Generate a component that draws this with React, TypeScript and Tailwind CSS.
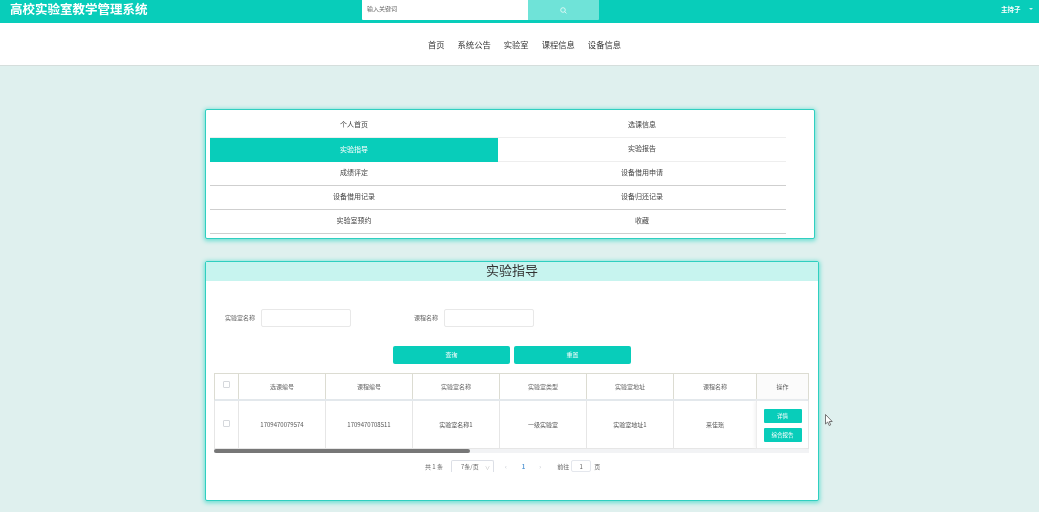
import React from "react";

const font = { fontFamily: '"Noto Sans CJK SC", "Liberation Sans", sans-serif' };

const menu = [
  ["个人首页", "选课信息"],
  ["实验指导", "实验报告"],
  ["成绩评定", "设备借用申请"],
  ["设备借用记录", "设备归还记录"],
  ["实验室预约", "收藏"],
];
const cols = ["选课编号", "课程编号", "实验室名称", "实验室类型", "实验室地址", "课程名称"];
const vals = ["1709470079574", "1709470708511", "实验室名称1", "一级实验室", "实验室地址1", "来佳瑶"];

function Box() {
  return <span className="block w-[7px] h-[7px] border border-[#d5d8dc] rounded-[1px] bg-white" />;
}

export default function App() {
  return (
    <div style={font} className="relative w-[1039px] h-[512px] overflow-hidden bg-[#dff0ee] text-[#333] blur-[0.3px]">
      <header className="h-[23px] bg-[#08cdba] flex text-white">
        <div className="w-[362px] pl-[10px] text-[12.5px] leading-[18px] font-bold">高校实验室教学管理系统</div>
        <div className="w-[166px] h-[20px] bg-white text-[#666] text-[6px] leading-[18px] pl-[5px] rounded-bl-[1px]">输入关键词</div>
        <div className="w-[71px] h-[20px] bg-[#6fe3d8] flex items-center justify-center rounded-br-[1px]">
          <svg width="7" height="7" viewBox="0 0 10 10" fill="none" stroke="#fff" strokeWidth="1">
            <circle cx="4.3" cy="4.3" r="3.3" />
            <path d="M6.8 6.8 9.2 9.2" />
          </svg>
        </div>
        <div className="ml-[402px] w-[20px] text-[6.5px] leading-[18px] font-bold whitespace-nowrap">主持子</div>
        <div className="ml-[8px] mt-[8px] w-0 h-0 border-x-[2px] border-x-transparent border-t-[2px] border-t-[#cdf3ef]" />
      </header>

      <nav className="h-[43px] bg-white border-b border-[#d5dedc] flex justify-center items-center gap-[13px] pl-[10px] text-[8.3px] text-[#333]">
        <span>首页</span>
        <span>系统公告</span>
        <span>实验室</span>
        <span>课程信息</span>
        <span>设备信息</span>
      </nav>

      <main className="pl-[205px] pt-[43px] flex flex-col gap-[22px]">
        <section className="w-[610px] h-[130px] bg-white rounded-[2px] border border-[#2fcfc0] shadow-[0_1px_4px_1px_#6fdfd3] pl-[4px] pt-[4px]">
          <div className="w-[576px] grid grid-cols-2">
            {menu.map((r, i) =>
              r.map((t) => {
                const active = t === "实验指导";
                const line = i >= 2 ? "border-[#cfcfcf]" : "border-[#eeeeee]";
                return (
                  <div
                    key={t}
                    className={
                      active
                        ? "h-[24px] bg-[#08cdba] text-white text-[7px] leading-[22px] text-center"
                        : `h-[24px] border-b ${line} text-[#444] text-[7px] leading-[21px] text-center`
                    }
                  >
                    {t}
                  </div>
                );
              })
            )}
          </div>
        </section>

        <section className="w-[614px] h-[240px] bg-white rounded-[2px] border border-[#2fcfc0] shadow-[0_1px_4px_1px_#6fdfd3]">
          <div className="h-[19px] bg-[#c7f4ef] text-center text-[13px] leading-[16px] text-[#333]">实验指导</div>

          <div className="flex items-center h-[19px] mt-[27px] text-[6px] text-[#666]">
            <span className="ml-[19px] w-[36px]">实验室名称</span>
            <span className="w-[90px] h-[18px] border border-[#e8e8e8] rounded-[2px] bg-white" />
            <span className="ml-[63px] w-[30px]">课程名称</span>
            <span className="w-[90px] h-[18px] border border-[#e8e8e8] rounded-[2px] bg-white" />
          </div>

          <div className="flex justify-center gap-[4px] mt-[19px]">
            <div className="w-[117px] h-[18px] bg-[#08cdba] rounded-[2px] text-white text-[6px] leading-[18px] text-center">查询</div>
            <div className="w-[117px] h-[18px] bg-[#08cdba] rounded-[2px] text-white text-[6px] leading-[18px] text-center">重置</div>
          </div>

          <div className="ml-[8px] mt-[9px] w-[595px] text-[6px] text-[#666]">
            <div className="flex h-[28px] border border-[#dcdcd2] border-b-2 border-b-[#e3e8ec]">
              <div className="w-[24px] border-r border-[#dcdcd2] pl-[8px] pt-[7px]"><Box /></div>
              {cols.map((c, i) => (
                <div
                  key={c}
                  className={`${i === 5 ? "w-[83px]" : "w-[87px]"} border-r border-[#dcdcd2] flex items-center justify-center`}
                >
                  {c}
                </div>
              ))}
              <div className="flex-1 flex items-center justify-center bg-[#fbfbfb]">操作</div>
            </div>
            <div className="flex h-[48px] border-x border-b border-[#e6e6e6]">
              <div className="w-[24px] border-r border-[#e6e6e6] pl-[8px] pt-[19px]"><Box /></div>
              {vals.map((c, i) => (
                <div
                  key={c}
                  className={`${i === 5 ? "w-[83px]" : "w-[87px]"} border-r border-[#e6e6e6] flex items-center justify-center text-[#555]`}
                >
                  {c}
                </div>
              ))}
              <div className="flex-1 flex flex-col items-center justify-center gap-[5px] pt-[1px] shadow-[-2px_0_4px_#f0f0f0]">
                <div className="w-[38px] h-[14px] bg-[#08cdba] rounded-[1px] text-white text-[5.5px] leading-[14px] text-center">详情</div>
                <div className="w-[38px] h-[14px] bg-[#08cdba] rounded-[1px] text-white text-[5.5px] leading-[14px] text-center">综合报告</div>
              </div>
            </div>
            <div className="h-[4px] bg-[#f2f3f5]">
              <div className="w-[256px] h-[4px] bg-[#777] rounded-[2px]" />
            </div>
          </div>

          <div className="flex items-center h-[12px] mt-[7px] ml-[219px] text-[6px] text-[#666]">
            <span className="w-[26px]">共 1 条</span>
            <span className="w-[43px] h-[12px] border-x border-t border-[#dcdfe6] rounded-t-[2px] flex items-center pl-[9px] pr-[3px] justify-between">
              <span>7条/页</span>
              <span className="text-[5px] text-[#bbb]">∨</span>
            </span>
            <span className="ml-[11px] text-[#c0c4cc]">‹</span>
            <span className="ml-[15px] text-[#5b9bd5] font-bold">1</span>
            <span className="ml-[14px] text-[#c0c4cc]">›</span>
            <span className="ml-[16px]">前往</span>
            <span className="ml-[2px] w-[20px] h-[12px] border border-[#e4e7ed] rounded-[2px] text-center leading-[11px]">1</span>
            <span className="ml-[3px]">页</span>
          </div>
        </section>
      </main>

      <svg className="absolute left-[825px] top-[414px]" width="8" height="13" viewBox="0 0 8 13" fill="#fff" stroke="#555" strokeWidth="0.8">
        <path d="M.5.5v9.5l2.2-2 1.5 3.5 1.5-.7-1.5-3.3h3z" />
      </svg>
    </div>
  );
}
